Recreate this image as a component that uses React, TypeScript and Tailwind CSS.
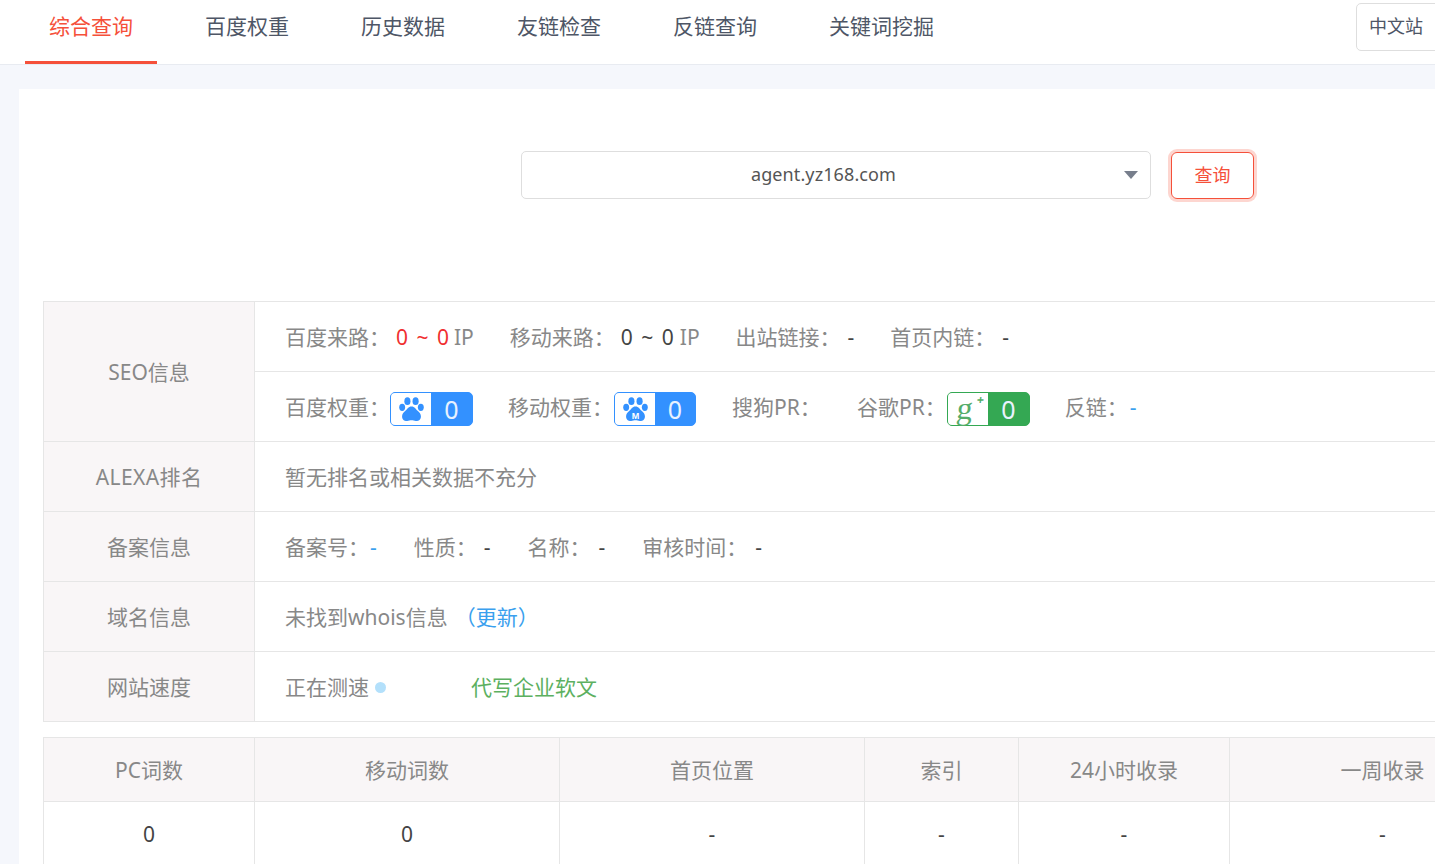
import type { ReactNode } from "react"

const FONT = "font-['Noto_Sans','Noto_Sans_CJK_SC',sans-serif]"

const tabs = ["综合查询", "百度权重", "历史数据", "友链检查", "反链查询", "关键词挖掘"]

function Paw({ mobile = false }: { mobile?: boolean }) {
  return (
    <svg viewBox="1 1.500 22 22" className="h-[25px] w-[25px] fill-[#3391ff]">
      <ellipse cx="8.4" cy="5.2" rx="2.7" ry="3.4" />
      <ellipse cx="15.6" cy="5.2" rx="2.7" ry="3.4" />
      <ellipse cx="3.8" cy="10.6" rx="2.6" ry="3.200" />
      <ellipse cx="20.2" cy="10.6" rx="2.6" ry="3.200" />
      <path d="M12 9.800c-2.800 0-3.700 2.300-5.400 3.800-1.600 1.400-2.900 2.900-2.900 5 0 2.700 2.200 4.300 4.500 4.100 1.400-.1 2.500-.7 3.800-.7s2.400.6 3.800.7c2.300.2 4.500-1.400 4.500-4.100 0-2.100-1.300-3.600-2.900-5-1.700-1.500-2.600-3.800-5.400-3.800z" />
      {mobile && (
        <text x="12" y="20.500" textAnchor="middle" fontSize="8" fontWeight="700" fill="#fff" fontFamily="Liberation Sans, sans-serif">
          M
        </text>
      )}
    </svg>
  )
}

function Badge({ icon, color, className }: { icon: ReactNode; color: string; className: string }) {
  const styles =
    color === "green"
      ? "border-[#34a853] bg-[#34a853]"
      : "border-[#3391ff] bg-[#3391ff]"
  return (
    <span className={`mt-[4px] inline-flex h-[34px] items-stretch rounded-[5px] border ${styles} ${className}`}>
      <span className="flex w-[40px] items-center justify-center rounded-l-[4px] bg-white">{icon}</span>
      <span className="flex flex-1 items-center justify-center text-[25px] text-[#e8f2ff]">0</span>
    </span>
  )
}

function Item({ label, children, className = "" }: { label: string; children?: ReactNode; className?: string }) {
  return (
    <span className={`inline-flex items-center whitespace-nowrap ${className}`}>
      <span className="text-[#888]">{label}</span>
      {children}
    </span>
  )
}

function InfoRow({ label, children }: { label: ReactNode; children: ReactNode }) {
  return (
    <div className="flex h-[70px] border-b border-[#e6e6e6]">
      <div className="flex w-[211px] shrink-0 items-center justify-center border-r border-[#e6e6e6] bg-[#f9f6f7] pt-[2px] text-[#888]">
        {label}
      </div>
      <div className="flex flex-1 items-center pl-[30px] pt-[2px]">{children}</div>
    </div>
  )
}

const statColumns = [
  { title: "PC词数", value: "0", width: "w-[211px]" },
  { title: "移动词数", value: "0", width: "w-[305px]" },
  { title: "首页位置", value: "-", width: "w-[305px]" },
  { title: "索引", value: "-", width: "w-[154px]" },
  { title: "24小时收录", value: "-", width: "w-[211px]" },
  { title: "一周收录", value: "-", width: "w-[306px]" },
]

export default function App() {
  return (
    <div className={`h-[864px] w-[1435px] overflow-hidden bg-[#f5f7fc] text-[21px] ${FONT}`}>
      <header className="flex h-[65px] items-start border-b border-[#e8ebf1] bg-white pl-[25px]">
        <nav className="flex gap-[24px]">
          {tabs.map((tab, i) => (
            <div
              key={tab}
              className={
                i === 0
                  ? "flex h-[64px] items-center border-b-[3px] border-[#f5503a] px-[24px] pb-[8px] text-[#f5503a]"
                  : "flex h-[64px] items-center px-[24px] pb-[11px] text-[#4e5666]"
              }
            >
              {tab}
            </div>
          ))}
        </nav>
        <div className="ml-auto mt-[3px] flex h-[48px] w-[90px] shrink-0 translate-x-[11px] items-center rounded-[5px] border border-[#dedede] pb-[1px] pl-[12px] text-[18px] text-[#4e5666]">
          中文站
        </div>
      </header>

      <main className="ml-[19px] mt-[24px] h-[800px] w-[1416px] bg-white pl-[24px]">
        <div className="flex h-[212px] items-start pl-[478px] pt-[62px]">
          <div className="relative flex h-[48px] w-[630px] items-center justify-center rounded-[5px] border border-[#dedede] pb-[2px] pr-[25px] text-[18px] tracking-[0.1px] text-[#555]">
            agent.yz168.com
            <span className="absolute right-[12px] top-[19px] h-0 w-0 border-x-[7px] border-t-[8px] border-x-transparent border-t-[#777e8c]" />
          </div>
          <button className="ml-[20px] mt-[1px] h-[47px] w-[83px] rounded-[6px] border border-[#f5503a] text-[18px] text-[#f5503a] shadow-[0_0_0_3px_#fdd6d0]">
            查询
          </button>
        </div>

        <div className="w-[1500px] border-l border-t border-[#e6e6e6]">
          <div className="flex h-[140px] border-b border-[#e6e6e6]">
            <div className="flex w-[211px] shrink-0 items-center justify-center border-r border-[#e6e6e6] bg-[#f9f6f7] pt-[2px] text-[#888]">
              SEO信息
            </div>
            <div className="flex flex-1 flex-col">
              <div className="flex h-[70px] items-center gap-[36px] border-b border-[#e6e6e6] pl-[30px] pt-[2px]">
                <Item label="百度来路：">
                  <span className="ml-[6px] text-[#f03030] [word-spacing:3px]">0 ~ 0</span>
                  <span className="ml-[5px] text-[#888]">IP</span>
                </Item>
                <Item label="移动来路：">
                  <span className="ml-[6px] text-[#444] [word-spacing:3px]">0 ~ 0</span>
                  <span className="ml-[6px] text-[#888]">IP</span>
                </Item>
                <Item label="出站链接：">
                  <span className="ml-[7px] text-[#444]">-</span>
                </Item>
                <Item label="首页内链：">
                  <span className="ml-[7px] text-[#444]">-</span>
                </Item>
              </div>
              <div className="flex h-[70px] items-center gap-[35px] pl-[30px] pt-[2px]">
                <Item label="百度权重：">
                  <Badge icon={<Paw />} color="blue" className="w-[83px]" />
                </Item>
                <Item label="移动权重：">
                  <Badge icon={<Paw mobile />} color="blue" className="ml-[1px] w-[82px]" />
                </Item>
                <Item label="搜狗PR：" className="ml-[1px] w-[90px]" />
                <Item label="谷歌PR：">
                  <Badge
                    color="green"
                    className="ml-[1px] w-[83px]"
                    icon={
                      <span className="relative -left-[3px] -top-[1px] inline-block -skew-x-6 font-['Liberation_Serif',serif] text-[32px] leading-[36px] text-[#55ad6a]">
                        g
                        <span className="absolute -right-[10px] top-[4px] font-['Liberation_Sans',sans-serif] text-[12px] font-bold leading-[12px]">+</span>
                      </span>
                    }
                  />
                </Item>
                <Item label="反链：">
                  <span className="ml-[2px] text-[#3aa0ee]">-</span>
                </Item>
              </div>
            </div>
          </div>

          <InfoRow label={<span className="tracking-[0.4px]">ALEXA排名</span>}>
            <span className="text-[#888]">暂无排名或相关数据不充分</span>
          </InfoRow>

          <InfoRow label="备案信息">
            <div className="flex gap-[37px]">
              <Item label="备案号：">
                <span className="ml-[1px] text-[#3aa0ee]">-</span>
              </Item>
              <Item label="性质：">
                <span className="ml-[7px] text-[#444]">-</span>
              </Item>
              <Item label="名称：">
                <span className="ml-[8px] text-[#444]">-</span>
              </Item>
              <Item label="审核时间：">
                <span className="ml-[8px] text-[#444]">-</span>
              </Item>
            </div>
          </InfoRow>

          <InfoRow label="域名信息">
            <span className="text-[#888]">未找到whois信息</span>
            <span className="ml-[7px] text-[#3aa0ee]">（更新）</span>
          </InfoRow>

          <InfoRow label="网站速度">
            <span className="text-[#888]">正在测速</span>
            <span className="ml-[6px] h-[11px] w-[11px] rounded-full bg-[#b3e0fb]" />
            <span className="ml-[85px] text-[#5cb060]">代写企业软文</span>
          </InfoRow>
        </div>

        <div className="mt-[15px] flex w-[1700px] border-l border-t border-[#e6e6e6]">
          {statColumns.map((col) => (
            <div key={col.title} className={`${col.width} shrink-0 border-r border-[#e6e6e6]`}>
              <div className="flex h-[64px] items-center justify-center border-b border-[#e6e6e6] bg-[#f9f6f7] pt-[2px] text-[#888]">
                {col.title}
              </div>
              <div className="flex h-[64px] items-center justify-center pt-[2px] text-[#444]">{col.value}</div>
            </div>
          ))}
        </div>
      </main>
    </div>
  )
}
